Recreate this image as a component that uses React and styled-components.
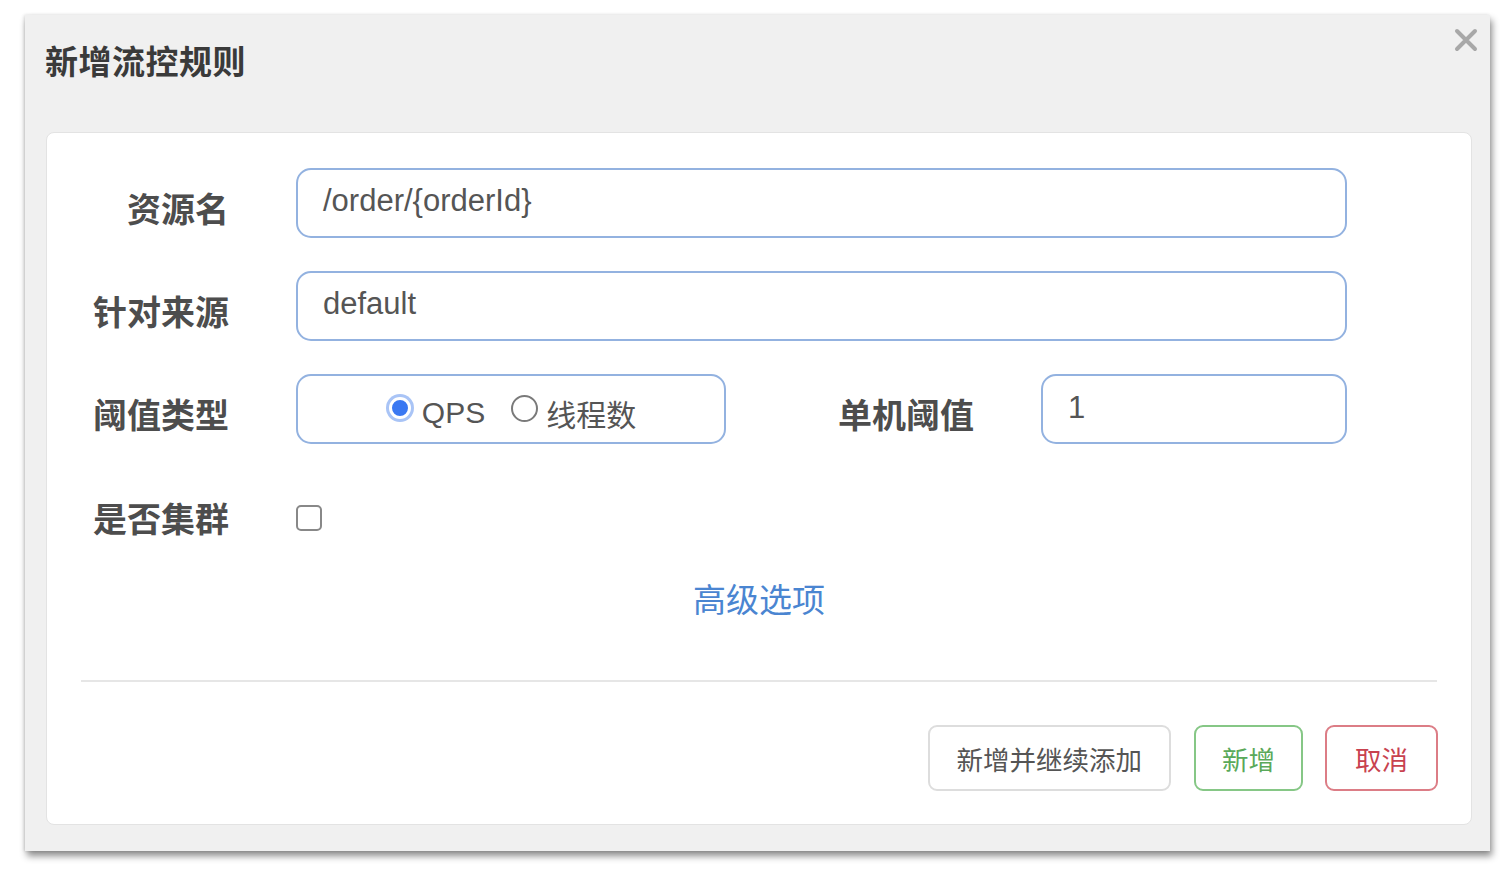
import React from "react";
import styled, { createGlobalStyle } from "styled-components";

const Global = createGlobalStyle`
  html, body { margin: 0; padding: 0; background: #ffffff; }
  body { font-family: "Liberation Sans", "Noto Sans CJK SC", sans-serif; }
  * { box-sizing: border-box; }
`;

const Page = styled.div`
  width: 1507px;
  height: 869px;
  padding: 15px 17px 18px 25px;
`;

const Dialog = styled.div`
  position: relative;
  width: 1465px;
  height: 836px;
  background: #f0f0f0;
  box-shadow: 2px 5px 7px rgba(0, 0, 0, 0.45), -1px 0 3px rgba(0, 0, 0, 0.12);
  display: flex;
  flex-direction: column;
`;

const Header = styled.div`
  height: 117px;
  padding: 28px 0 0 20px;
`;

const Title = styled.h2`
  margin: 0;
  font-size: 33px;
  line-height: 40px;
  font-weight: 700;
  color: #3a3a3a;
  letter-spacing: 0.5px;
`;

const Close = styled.button`
  position: absolute;
  top: 11px;
  right: 10px;
  width: 28px;
  height: 28px;
  padding: 0;
  border: 0;
  background: transparent;
  display: flex;
  align-items: center;
  justify-content: center;
`;

const Card = styled.div`
  flex: 1;
  margin: 0 18px 26px 21px;
  background: #fff;
  border: 1px solid #e3e3e3;
  border-radius: 8px;
  padding: 35px 34px 32px 0;
  display: flex;
  flex-direction: column;
`;

const Row = styled.div`
  display: flex;
  align-items: center;
  height: 70px;
  margin-bottom: ${(p) => p.$mb ?? 33}px;
  padding-right: 90px;
`;

const Label = styled.label`
  width: ${(p) => p.$w ?? 182}px;
  flex: none;
  text-align: right;
  font-size: 34px;
  font-weight: 700;
  color: #4d4d4d;
  padding-top: 8px;
  margin-right: ${(p) => p.$gap ?? 67}px;
  white-space: nowrap;
`;

const Input = styled.div`
  flex: ${(p) => (p.$w ? "none" : "1")};
  width: ${(p) => (p.$w ? `${p.$w}px` : "auto")};
  height: 70px;
  border: 2px solid #93b2e0;
  border-radius: 15px;
  display: flex;
  align-items: center;
  justify-content: ${(p) => (p.$center ? "center" : "flex-start")};
  padding: 0 0 0 ${(p) => (p.$center ? 0 : 25)}px;
  font-size: 31px;
  color: #555;
`;

const InputText = styled.span`
  margin-top: ${(p) => p.$mt ?? -4}px;
`;

const RadioItem = styled.span`
  display: inline-flex;
  align-items: center;
  margin-right: ${(p) => p.$mr ?? 0}px;
  font-size: 30px;
  color: #555;
  margin-top: 8px;
`;

const RadioDot = styled.span`
  width: 27px;
  height: 27px;
  border-radius: 50%;
  margin-right: 8px;
  margin-top: -10px;
  flex: none;
  ${(p) =>
    p.$on
      ? `background: #3a78f2; border: 3px solid #fff; box-shadow: 0 0 0 3px #a9c4f6;`
      : `background: #fff; border: 2px solid #7a7a7a;`}
  ${(p) => (p.$on ? "width: 22px; height: 22px; margin-left: 3px; margin-right: 11px;" : "")}
`;

const Checkbox = styled.span`
  width: 26px;
  height: 26px;
  border: 2px solid #888;
  border-radius: 5px;
  margin-top: 10px;
`;

const LinkRow = styled.div`
  display: flex;
  justify-content: center;
  padding-left: 34px;
  margin-top: 33px;
`;

const Link = styled.a`
  font-size: 33px;
  color: #4a85d1;
  text-decoration: none;
  line-height: 40px;
`;

const Divider = styled.hr`
  margin: 59px 0 43px 34px;
  border: 0;
  border-top: 2px solid #e6e6e6;
`;

const Footer = styled.div`
  display: flex;
  justify-content: flex-end;
  gap: 22px;
  margin-right: -1px;
`;

const Button = styled.button`
  height: 66px;
  padding: 0 ${(p) => p.$px ?? 28}px;
  margin-right: ${(p) => p.$mr ?? 0}px;
  background: #fff;
  border: 2px solid ${(p) => p.$border};
  color: ${(p) => p.$color};
  border-radius: 9px;
  font-family: inherit;
  font-size: 26.5px;
`;

export default function App() {
  return (
    <Page>
      <Global />
      <Dialog>
        <Header>
          <Title>新增流控规则</Title>
        </Header>
        <Close aria-label="close">
          <svg width="24" height="24" viewBox="0 0 24 24">
            <path d="M3 3 L21 21 M21 3 L3 21" stroke="#a8a8a8" strokeWidth="4" strokeLinecap="round" />
          </svg>
        </Close>
        <Card>
          <Row>
            <Label>资源名</Label>
            <Input>
              <InputText>/order/&#123;orderId&#125;</InputText>
            </Input>
          </Row>
          <Row>
            <Label>针对来源</Label>
            <Input>
              <InputText>default</InputText>
            </Input>
          </Row>
          <Row $mb={34}>
            <Label>阈值类型</Label>
            <Input $w={430} $center>
              <RadioItem $mr={26}>
                <RadioDot $on />
                QPS
              </RadioItem>
              <RadioItem>
                <RadioDot />
                线程数
              </RadioItem>
            </Input>
            <Label $w={248} $gap={67}>单机阈值</Label>
            <Input>
              <InputText $mt={-2}>1</InputText>
            </Input>
          </Row>
          <Row $mb={0}>
            <Label>是否集群</Label>
            <Checkbox />
          </Row>
          <LinkRow>
            <Link href="#">高级选项</Link>
          </LinkRow>
          <Divider />
          <Footer>
            <Button $border="#dddddd" $color="#555" $px={27} $mr={1}>新增并继续添加</Button>
            <Button $border="#86c786" $color="#5aa95a" $px={26}>新增</Button>
            <Button $border="#dc7d86" $color="#c8424f" $px={28}>取消</Button>
          </Footer>
        </Card>
      </Dialog>
    </Page>
  );
}
